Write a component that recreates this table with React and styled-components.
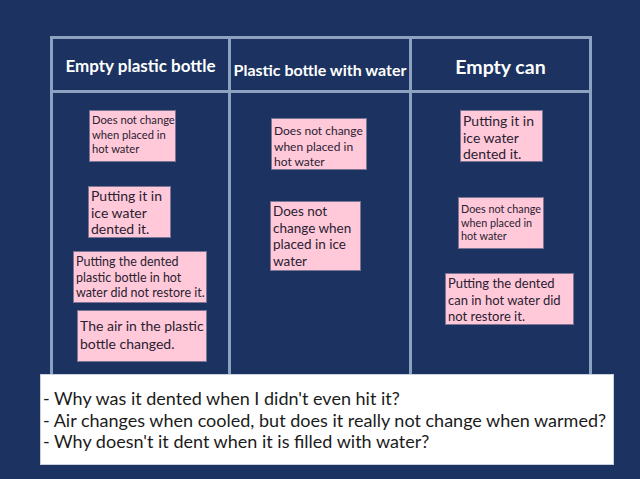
import React from 'react';
import styled, { createGlobalStyle } from 'styled-components';

const GlobalStyle = createGlobalStyle`
  html, body { margin: 0; padding: 0; }
  body { background: #1c3260; font-family: "Lato", "Noto Sans", sans-serif; }
`;

const Slide = styled.div`
  position: relative;
  width: 640px;
  height: 479px;
  background: #1c3260;
  overflow: hidden;
  padding: 36px 0 0 50px;
  box-sizing: border-box;
`;

const Table = styled.div`
  display: grid;
  grid-template-columns: 175px 178px 177px;
  grid-template-rows: 51px 360px;
  gap: 3px;
  width: max-content;
  border: 3px solid #8da2c0;
  background: #8da2c0;
`;

const HeadCell = styled.div`
  background: #1c3260;
  color: #ffffff;
  display: flex;
  justify-content: center;
  align-items: center;
  font-weight: 700;
  font-size: ${p => p.size}px;
  padding-top: ${p => p.shift || 0}px;
  box-sizing: border-box;
  white-space: nowrap;
`;

const BodyCell = styled.div`
  position: relative;
  background: #1c3260;
`;

const Note = styled.div`
  position: absolute;
  left: ${p => p.x}px;
  top: ${p => p.y}px;
  width: ${p => p.w}px;
  height: ${p => p.h}px;
  box-sizing: border-box;
  background: #ffc9da;
  border: 1px solid #7d7596;
  color: #2a2130;
  font-size: ${p => p.size}px;
  line-height: ${p => p.lh}px;
  padding: ${p => p.pad || 2}px 1px 0 2px;
  white-space: pre;
  overflow: hidden;
`;

const Questions = styled.div`
  position: absolute;
  left: 40px;
  top: 374px;
  width: 574px;
  height: 91px;
  box-sizing: border-box;
  background: #ffffff;
  border: 1px solid #c8d0dc;
  padding: 13px 0 0 2px;
  color: #1b1b1b;
  font-size: 18px;
  line-height: 21.5px;
  white-space: pre;
`;

const columns = [
  {
    title: 'Empty plastic bottle', size: 17, shift: 2,
    notes: [
      { x: 36, y: 17, w: 87, h: 52, size: 11.2, lh: 14.5, text: 'Does not change\nwhen placed in\nhot water' },
      { x: 35, y: 93, w: 83, h: 52, size: 14, lh: 16.5, pad: 1, text: 'Putting it in\nice water\ndented it.' },
      { x: 20, y: 158, w: 134, h: 52, size: 12.5, lh: 15.5, pad: 2, text: 'Putting the dented\nplastic bottle in hot\nwater did not restore it.' },
      { x: 24, y: 217, w: 130, h: 52, size: 14, lh: 17.5, pad: 6, text: 'The air in the plastic\nbottle changed.' },
    ],
  },
  {
    title: 'Plastic bottle with water', size: 16, shift: 9,
    notes: [
      { x: 40, y: 25, w: 96, h: 52, size: 12, lh: 15.5, pad: 4, text: 'Does not change\nwhen placed in\nhot water' },
      { x: 39, y: 108, w: 91, h: 70, size: 13.5, lh: 16.5, pad: 1, text: 'Does not\nchange when\nplaced in ice\nwater' },
    ],
  },
  {
    title: 'Empty can', size: 19.5, shift: 4,
    notes: [
      { x: 48, y: 17, w: 83, h: 52, size: 14, lh: 16.5, pad: 2, text: 'Putting it in\nice water\ndented it.' },
      { x: 46, y: 104, w: 86, h: 52, size: 10.8, lh: 13.5, pad: 4, text: 'Does not change\nwhen placed in\nhot water' },
      { x: 33, y: 180, w: 129, h: 52, size: 13, lh: 16.5, pad: 1, text: 'Putting the dented\ncan in hot water did\nnot restore it.' },
    ],
  },
];

export default function App() {
  return (
    <>
      <GlobalStyle />
      <Slide>
        <Table>
          {columns.map(c => (
            <HeadCell key={c.title} size={c.size} shift={c.shift}>{c.title}</HeadCell>
          ))}
          {columns.map(c => (
            <BodyCell key={c.title + '-body'}>
              {c.notes.map((n, i) => (
                <Note key={i} x={n.x} y={n.y} w={n.w} h={n.h} size={n.size} lh={n.lh} pad={n.pad}>
                  {n.text}
                </Note>
              ))}
            </BodyCell>
          ))}
        </Table>
        <Questions>
          {"- Why was it dented when I didn't even hit it?\n- Air changes when cooled, but does it really not change when warmed?\n- Why doesn't it dent when it is filled with water?"}
        </Questions>
      </Slide>
    </>
  );
}
